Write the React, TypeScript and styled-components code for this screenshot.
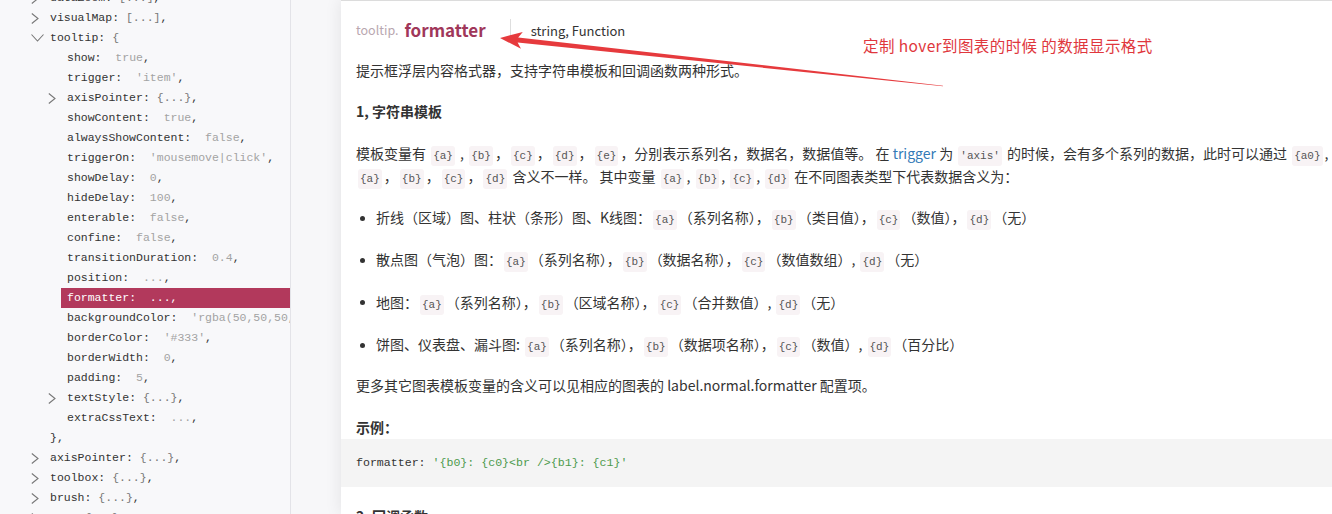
import React from "react";
import styled, { createGlobalStyle } from "styled-components";

const GlobalStyle = createGlobalStyle`
  html, body { margin: 0; padding: 0; }
  body {
    width: 1332px;
    height: 514px;
    overflow: hidden;
    background: #f7f7f9;
    font-family: "Noto Sans CJK SC", "Noto Sans", sans-serif;
    color: #333;
  }
`;

const Page = styled.div`
  position: relative;
  display: flex;
  width: 1332px;
  height: 514px;
  overflow: hidden;
`;

const Sidebar = styled.div`
  width: 290px;
  flex: none;
  background: #f8f8fa;
  border-right: 1px solid #e3e3e8;
  overflow: hidden;
`;

const Tree = styled.div`
  margin-top: -12px;
  display: flex;
  flex-direction: column;
`;

const Row = styled.div`
  display: flex;
  align-items: center;
  height: 20px;
  font-family: "Liberation Mono", "DejaVu Sans Mono", monospace;
  font-size: 11.5px;
  white-space: pre;
`;

const Indent = styled.div<{ $level: number }>`
  width: ${(p) => 12 + p.$level * 17}px;
  flex: none;
`;

const Toggle = styled.div`
  width: 15px;
  height: 20px;
  flex: none;
  display: flex;
  align-items: center;
  padding-left: 2px;
  box-sizing: border-box;
`;

const Label = styled.div<{ $active?: boolean }>`
  flex: 1;
  height: 20px;
  line-height: 20px;
  padding-left: 6px;
  background: ${(p) => (p.$active ? "#b2395c" : "transparent")};
  color: ${(p) => (p.$active ? "#fff" : "#333")};
`;

const Val = styled.span<{ $active?: boolean; $obj?: boolean }>`
  color: ${(p) => (p.$active ? "#fff" : p.$obj ? "#777" : "#a3a3a3")};
`;

const Gap = styled.div`
  width: 50px;
  flex: none;
  background: #f7f7f9;
`;

const Panel = styled.div`
  flex: 1;
  min-width: 0;
  background: #fff;
  border-top: 1px solid #dcdcdc;
  box-shadow: 0 0 16px rgba(0, 0, 0, 0.09);
  padding: 16px 0 0 15px;
  overflow: hidden;
  display: flex;
  flex-direction: column;
  gap: 18.5px;
`;

const TitleRow = styled.div`
  display: flex;
  align-items: center;
  height: 30px;
  margin-bottom: -2px;
`;

const Prefix = styled.span`
  font-size: 12.5px;
  color: #b9a7b0;
  margin-right: 6px;
`;

const Name = styled.span`
  font-size: 17px;
  font-weight: 700;
  color: #a0375a;
`;

const Divider = styled.span`
  width: 1px;
  height: 21px;
  background: #dedede;
  margin: 0 20px 0 24px;
`;

const Type = styled.span`
  font-size: 13px;
  color: #333;
  margin-top: 2px;
`;

const Text = styled.div`
  font-size: 14px;
  line-height: 23px;
  color: #333;
  white-space: nowrap;
`;

const Heading = styled(Text)`
  font-weight: 700;
`;

const Code = styled.code`
  font-family: "Liberation Mono", "DejaVu Sans Mono", monospace;
  font-size: 11px;
  line-height: 1;
  color: #555;
  background: #f8f3f5;
  padding: 4px 2px;
  margin: 0 2px;
  border-radius: 3px;
`;

const Link = styled.span`
  color: #337ab7;
`;

const List = styled.ul`
  list-style: none;
  margin: 0;
  padding: 0;
  display: flex;
  flex-direction: column;
  gap: 19.3px;
`;

const Item = styled.li`
  display: block;
  height: 23px;
  font-size: 14px;
  line-height: 23px;
  white-space: nowrap;
`;

const Dot = styled.span`
  display: inline-block;
  vertical-align: middle;
  width: 5px;
  height: 5px;
  border-radius: 50%;
  background: #333;
  margin: -2px 11px 0 4px;
`;

const Example = styled(Heading)`
  margin-bottom: -18.5px;
`;

const CodeBlock = styled.pre`
  margin: 0 0 0 -15px;
  padding: 0 15px;
  height: 48px;
  line-height: 48px;
  background: #f4f4f4;
  font-family: "Liberation Mono", "DejaVu Sans Mono", monospace;
  font-size: 11.6px;
  color: #333;
`;

const Str = styled.span`
  color: #4d9a4d;
`;

const Note = styled.div`
  position: absolute;
  left: 863px;
  top: 35px;
  font-size: 15.5px;
  letter-spacing: 0.4px;
  line-height: 20px;
  color: #e0373d;
  white-space: nowrap;
`;

const Arrow = styled.svg`
  position: absolute;
  left: 0;
  top: 0;
  pointer-events: none;
`;

const Chevron = ({ open }: { open?: boolean }) =>
  open ? (
    <svg width="13" height="8" viewBox="0 0 13 8">
      <path d="M0.5 0.5 L6.5 7 L12.5 0.5" fill="none" stroke="#777" strokeWidth="1.1" />
    </svg>
  ) : (
    <svg width="8" height="11" viewBox="0 0 8 11">
      <path d="M0.8 0.5 L7 5.5 L0.8 10.5" fill="none" stroke="#777" strokeWidth="1.1" />
    </svg>
  );

type Node = {
  level: number;
  key?: string;
  value: string;
  obj?: boolean;
  toggle?: "open" | "closed";
  active?: boolean;
  raw?: boolean;
};

const nodes: Node[] = [
  { level: 1, key: "dataZoom", value: "[...]", obj: true, toggle: "closed" },
  { level: 1, key: "visualMap", value: "[...]", obj: true, toggle: "closed" },
  { level: 1, key: "tooltip", value: "{", obj: true, toggle: "open" },
  { level: 2, key: "show", value: "true" },
  { level: 2, key: "trigger", value: "'item'" },
  { level: 2, key: "axisPointer", value: "{...}", obj: true, toggle: "closed" },
  { level: 2, key: "showContent", value: "true" },
  { level: 2, key: "alwaysShowContent", value: "false" },
  { level: 2, key: "triggerOn", value: "'mousemove|click'" },
  { level: 2, key: "showDelay", value: "0" },
  { level: 2, key: "hideDelay", value: "100" },
  { level: 2, key: "enterable", value: "false" },
  { level: 2, key: "confine", value: "false" },
  { level: 2, key: "transitionDuration", value: "0.4" },
  { level: 2, key: "position", value: "..." },
  { level: 2, key: "formatter", value: "...", active: true },
  { level: 2, key: "backgroundColor", value: "'rgba(50,50,50,0.7)'" },
  { level: 2, key: "borderColor", value: "'#333'" },
  { level: 2, key: "borderWidth", value: "0" },
  { level: 2, key: "padding", value: "5" },
  { level: 2, key: "textStyle", value: "{...}", obj: true, toggle: "closed" },
  { level: 2, key: "extraCssText", value: "..." },
  { level: 1, value: "},", raw: true },
  { level: 1, key: "axisPointer", value: "{...}", obj: true, toggle: "closed" },
  { level: 1, key: "toolbox", value: "{...}", obj: true, toggle: "closed" },
  { level: 1, key: "brush", value: "{...}", obj: true, toggle: "closed" },
  { level: 1, key: "geo", value: "{...}", obj: true, toggle: "closed" },
];

const TreeRow = ({ n }: { n: Node }) => (
  <Row>
    <Indent $level={n.level} />
    <Toggle>{n.toggle ? <Chevron open={n.toggle === "open"} /> : null}</Toggle>
    <Label $active={n.active}>
      {n.raw ? (
        n.value
      ) : (
        <>
          {n.key}:{n.obj ? " " : "  "}
          <Val $active={n.active} $obj={n.obj}>
            {n.value}
          </Val>
          {n.value === "{" ? "" : ","}
        </>
      )}
    </Label>
  </Row>
);

// tapered arrow from tail to tip
const tip = { x: 500, y: 38 };
const tail = { x: 943, y: 86 };
const dx = tail.x - tip.x;
const dy = tail.y - tip.y;
const len = Math.sqrt(dx * dx + dy * dy);
const ux = dx / len;
const uy = dy / len;
const nx = -uy;
const ny = ux;
const headLen = 22;
const headW = 8.5;
const bx = tip.x + ux * headLen;
const by = tip.y + uy * headLen;
const nk = tip.x + ux * (headLen - 4);
const nky = tip.y + uy * (headLen - 4);
const sw0 = 2.6;
const sw1 = 0.3;
const pts = [
  [tip.x, tip.y],
  [bx + nx * headW, by + ny * headW],
  [nk + nx * sw0, nky + ny * sw0],
  [tail.x + nx * sw1, tail.y + ny * sw1],
  [tail.x - nx * sw1, tail.y - ny * sw1],
  [nk - nx * sw0, nky - ny * sw0],
  [bx - nx * headW, by - ny * headW],
]
  .map((p) => `${p[0].toFixed(1)},${p[1].toFixed(1)}`)
  .join(" ");

const C = ({ v }: { v: string }) => <Code>{v}</Code>;

export default function App() {
  return (
    <>
      <GlobalStyle />
      <Page>
        <Sidebar>
          <Tree>
            {nodes.map((n, i) => (
              <TreeRow key={i} n={n} />
            ))}
          </Tree>
        </Sidebar>
        <Gap />
        <Panel>
          <TitleRow>
            <Prefix>tooltip.</Prefix>
            <Name>formatter</Name>
            <Divider />
            <Type>string, Function</Type>
          </TitleRow>
          <Text>提示框浮层内容格式器，支持字符串模板和回调函数两种形式。</Text>
          <Heading>1, 字符串模板</Heading>
          <Text>
            模板变量有 <C v="{a}" /> , <C v="{b}" />，<C v="{c}" />，<C v="{d}" />，<C v="{e}" />
            ，分别表示系列名，数据名，数据值等。 在 <Link>trigger</Link> 为 <C v="'axis'" /> 的时候，会有多个系列的数据，此时可以通过{" "}
            <C v="{a0}" />, <C v="{a1}" />, <C v="{a2}" /> 这种后面加索引的方式表示系列的索引。
            <br />
            <C v="{a}" />，<C v="{b}" />，<C v="{c}" />，<C v="{d}" /> 含义不一样。 其中变量 <C v="{a}" />, <C v="{b}" />,{" "}
            <C v="{c}" />, <C v="{d}" /> 在不同图表类型下代表数据含义为：
          </Text>
          <List>
            <Item>
              <Dot />
              折线（区域）图、柱状（条形）图、K线图：<C v="{a}" />（系列名称），<C v="{b}" />（类目值），<C v="{c}" />
              （数值），<C v="{d}" />（无）
            </Item>
            <Item>
              <Dot />
              散点图（气泡）图：<C v="{a}" />（系列名称），<C v="{b}" />（数据名称），<C v="{c}" />（数值数组）,{" "}
              <C v="{d}" />（无）
            </Item>
            <Item>
              <Dot />
              地图：<C v="{a}" />（系列名称），<C v="{b}" />（区域名称），<C v="{c}" />（合并数值）, <C v="{d}" />（无）
            </Item>
            <Item>
              <Dot />
              饼图、仪表盘、漏斗图: <C v="{a}" />（系列名称），<C v="{b}" />（数据项名称），<C v="{c}" />（数值）,{" "}
              <C v="{d}" />（百分比）
            </Item>
          </List>
          <Text>更多其它图表模板变量的含义可以见相应的图表的 label.normal.formatter 配置项。</Text>
          <Example>示例：</Example>
          <CodeBlock>
            formatter: <Str>'{"{b0}: {c0}<br />{b1}: {c1}"}'</Str>
          </CodeBlock>
          <Heading>2, 回调函数</Heading>
        </Panel>
        <Note>定制 hover到图表的时候 的数据显示格式</Note>
        <Arrow width="1332" height="514" viewBox="0 0 1332 514">
          <polygon points={pts} fill="#e63a3d" />
        </Arrow>
      </Page>
    </>
  );
}
